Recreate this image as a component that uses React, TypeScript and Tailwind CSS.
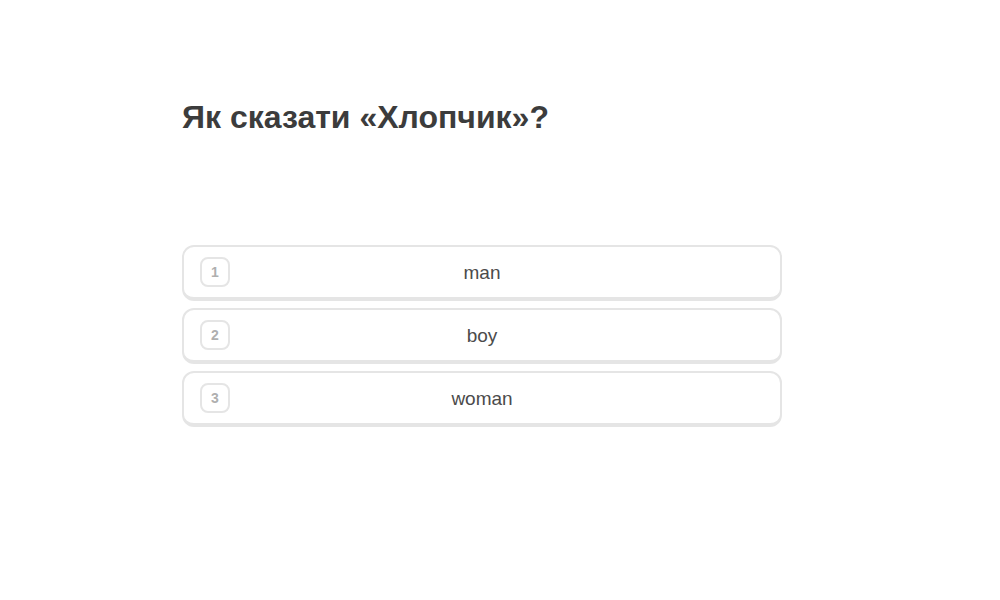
import React from "react";

const options = ["man", "boy", "woman"];

export default function App() {
  return (
    <div className="min-h-[600px] w-[1000px] bg-white" style={{ fontFamily: '"Liberation Sans", Arial, sans-serif' }}>
      <div className="ml-[182px] w-[600px] pt-[96px]">
        <h1 className="text-[32px] font-bold leading-[42px] text-[#3c3c3c]">Як сказати «Хлопчик»?</h1>
        <div className="mt-[107px] flex flex-col gap-[7px]">
          {options.map((o, i) => (
            <button
              key={o}
              className="relative flex h-[56px] w-full items-center rounded-xl border-2 border-b-4 border-[#e5e5e5] bg-white px-4 text-left"
            >
              <span className="flex h-[30px] w-[30px] shrink-0 items-center justify-center rounded-lg border-2 border-[#e5e5e5] pt-px text-[14px] font-bold text-[#afafaf]">
                {i + 1}
              </span>
              <span className="flex-1 pr-[30px] pt-[2px] text-center text-[19px] text-[#4b4b4b]">{o}</span>
            </button>
          ))}
        </div>
      </div>
    </div>
  );
}
